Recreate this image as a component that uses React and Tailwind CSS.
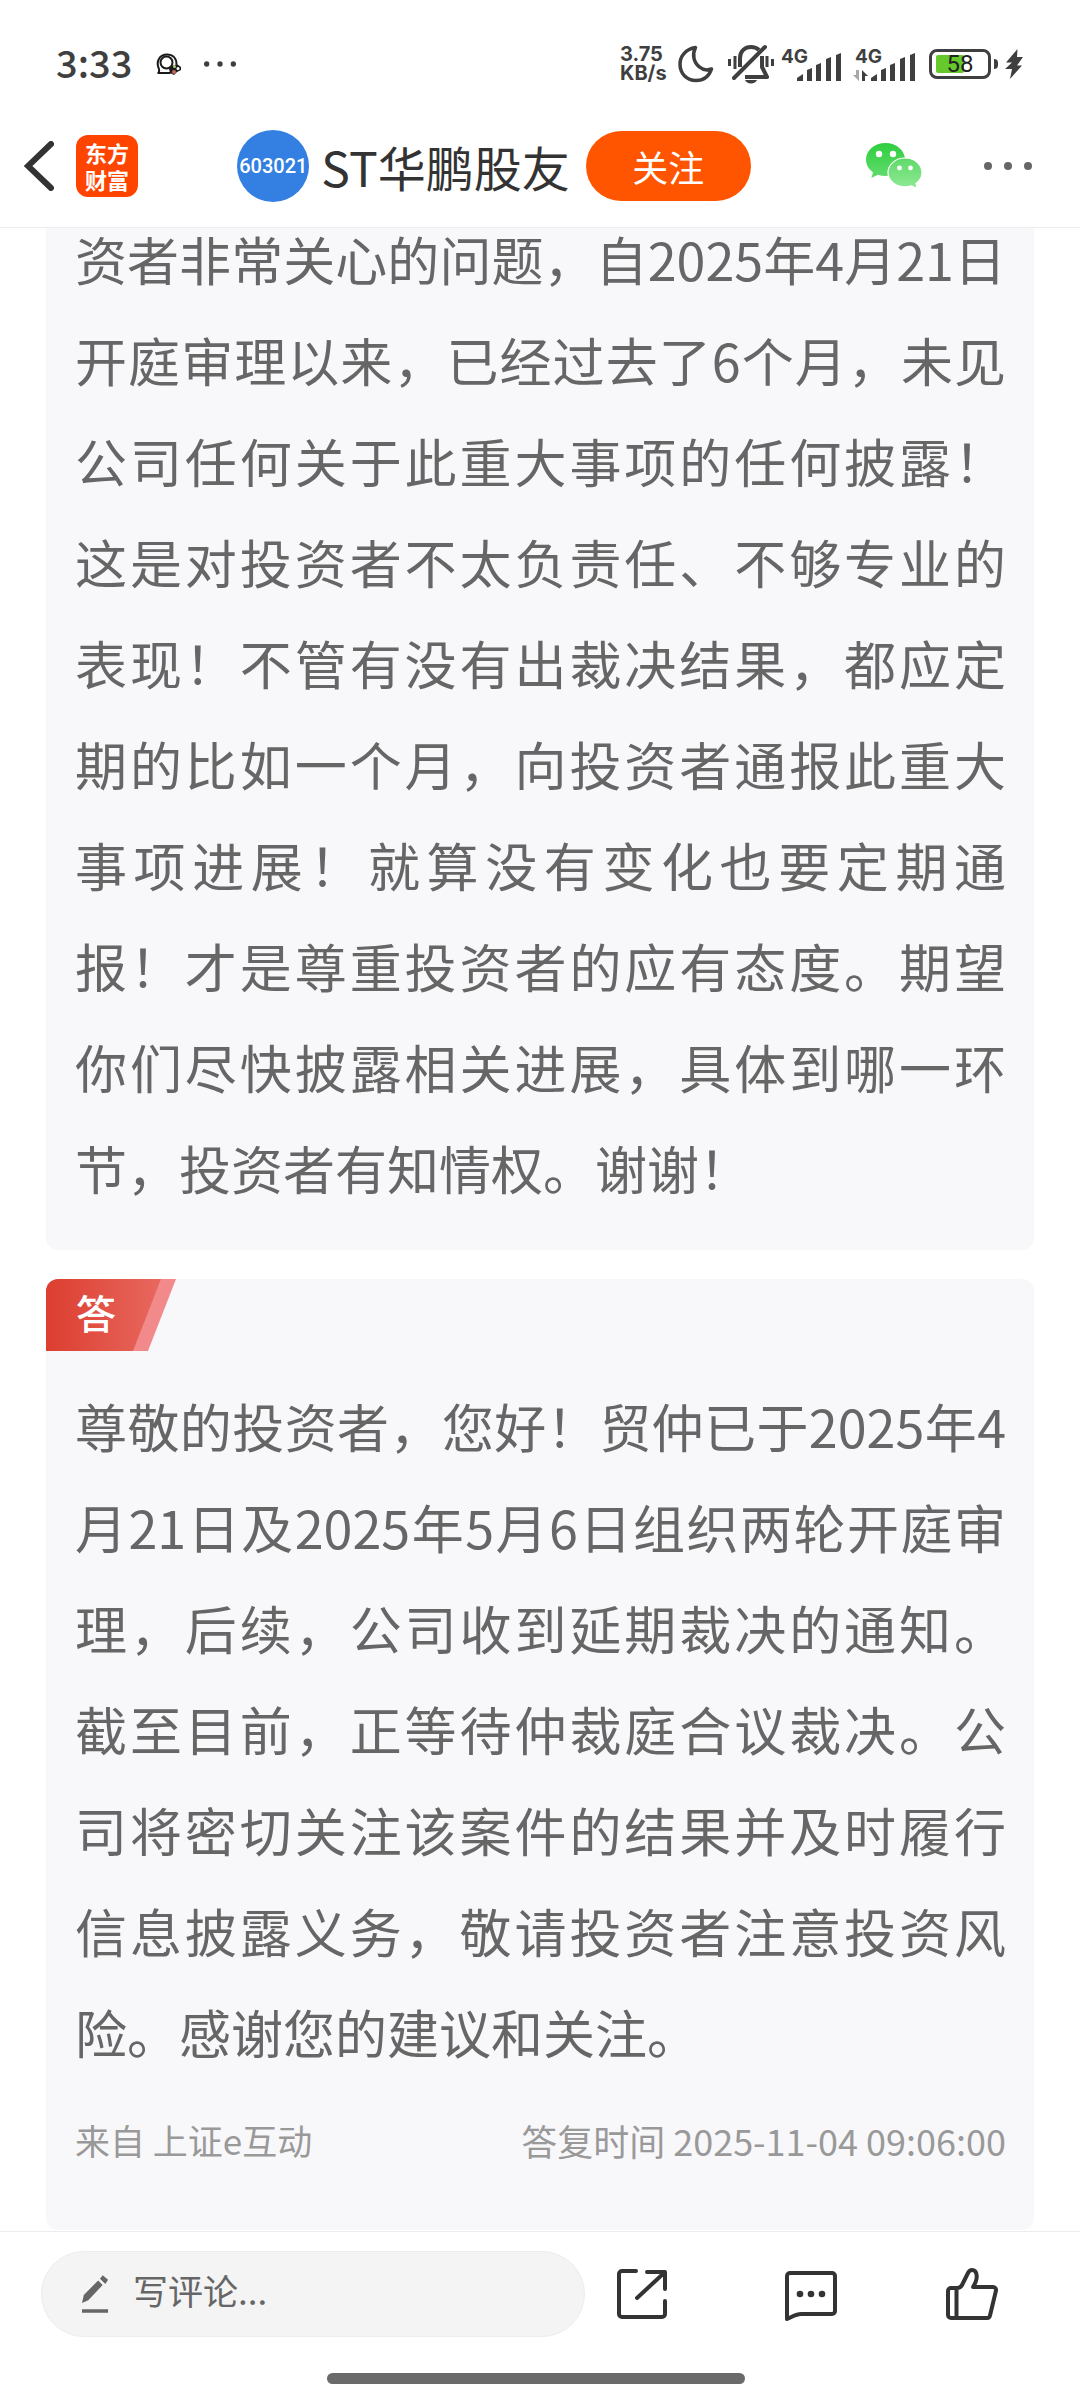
import React from 'react';

const question =
  '资者非常关心的问题，自2025年4月21日开庭审理以来，已经过去了6个月，未见公司任何关于此重大事项的任何披露！这是对投资者不太负责任、不够专业的表现！不管有没有出裁决结果，都应定期的比如一个月，向投资者通报此重大事项进展！就算没有变化也要定期通报！才是尊重投资者的应有态度。期望你们尽快披露相关进展，具体到哪一环节，投资者有知情权。谢谢！';

const answer =
  '尊敬的投资者，您好！贸仲已于2025年4月21日及2025年5月6日组织两轮开庭审理，后续，公司收到延期裁决的通知。截至目前，正等待仲裁庭合议裁决。公司将密切关注该案件的结果并及时履行信息披露义务，敬请投资者注意投资风险。感谢您的建议和关注。';

const Dots = ({ className }) => (
  <svg viewBox="0 0 48 8" className={className} fill="currentColor" aria-hidden="true">
    <circle cx="4" cy="4" r="4" />
    <circle cx="24" cy="4" r="4" />
    <circle cx="44" cy="4" r="4" />
  </svg>
);

const ChatIcon = () => (
  <svg viewBox="0 0 26 22" className="h-[22px] w-[26px]" fill="none" aria-hidden="true">
    <path d="M2.5 20c.8-1.500.8-3 .3-4.500C-.5 8 4 1.500 11 1.500c5.500 0 9.500 3.500 9.500 10" stroke="#1a1a1a" strokeWidth="2" />
    <path d="M1.500 20h13" stroke="#1a1a1a" strokeWidth="2" />
    <circle cx="10.500" cy="9.500" r="6" stroke="#1a1a1a" strokeWidth="2" />
    <path d="M13 16l3-3 5-2 4 3v3l-4 2-3 3-4-2z" fill="#1a1a1a" />
    <circle cx="18.500" cy="13.500" r="1.500" fill="#b5c47a" />
    <circle cx="22" cy="15.500" r="1.500" fill="#fff" />
    <circle cx="18" cy="19" r="2" fill="#c8685a" />
  </svg>
);

const MoonIcon = () => (
  <svg viewBox="0 0 36 38" className="h-[38px] w-9" fill="none" stroke="currentColor" strokeWidth="3.500" strokeLinejoin="round" aria-hidden="true">
    <path d="M17.500 2.500C8 4 2 11 2 19c0 10 7 16.500 16 16.500 7.500 0 13-4 15.500-11.500-4 1.500-8.500 1-12-2-6-4.500-7.500-12.500-4-19.500z" />
  </svg>
);

const MutedBellIcon = () => (
  <svg viewBox="0 0 46 40" className="h-10 w-[46px]" fill="none" stroke="currentColor" strokeWidth="4" aria-hidden="true">
    <path d="M12 23V14c0-7 5-11 11-11 3 0 6 1 8 3" />
    <path d="M34 12v11l5 10H17" strokeLinejoin="round" />
    <path d="M6 34 37 3" strokeLinecap="round" />
    <path d="M1.500 15v7M7 12v13M39 12v11M44.500 15v7" strokeWidth="3" />
    <path d="M17 36h12c-1 2-3 3.500-6 3.500s-5-1.500-6-3.500z" fill="currentColor" stroke="none" />
  </svg>
);

const Signal = ({ data }) => (
  <div className="relative h-[34px] w-[62px]">
    <span className="absolute top-0 left-0.5 font-[Inter] text-[19px] leading-5 font-bold">4G</span>
    <svg viewBox="0 0 62 34" className="h-full w-full" fill="currentColor" aria-hidden="true">
      {data && <path d="M6 23v11l-6-6h3v-5z" fill="#a8a8a8" />}
      {data && <path d="M9 23l6 6h-3v5H9z" />}
      <path d="M18 34v-3l6-4v7zM28 34V23l5-2v13zM37 34V18l5-2v18zM47 34V12l5-2v24zM57 34V8l5-2v28z" />
    </svg>
  </div>
);

const StatusBar = () => (
  <div className="flex h-[84px] items-end justify-between pr-[57px] pl-14 text-[#3f3f3f]">
    <div className="flex h-10 items-center">
      <span className="pb-1 text-[38px] leading-10 font-medium">3:33</span>
      <span className="ml-6">
        <ChatIcon />
      </span>
      <Dots className="ml-[22px] h-[6px] w-8" />
    </div>
    <div className="flex h-10 items-center">
      <div className="w-[46px] font-[Inter] text-[20px] leading-[19px] font-bold">
        <div>3.75</div>
        <div>KB/s</div>
      </div>
      <span className="ml-3"><MoonIcon /></span>
      <span className="ml-3.5"><MutedBellIcon /></span>
      <span className="ml-[5px]"><Signal /></span>
      <span className="ml-3"><Signal data /></span>
      <div className="relative ml-3.5 flex h-[30px] w-[62px] items-center justify-center rounded-lg border-3 border-current">
        <div className="absolute top-[3px] left-1 h-[18px] w-7 rounded-xs bg-[#65c92b]" />
        <span className="relative font-[Roboto] text-[24px] leading-6 text-[#222]">58</span>
      </div>
      <span className="ml-[3px] h-2.5 w-1 rounded-r-full bg-current" />
      <svg viewBox="0 0 18 30" className="ml-[7px] h-[30px] w-[18px]" fill="currentColor" aria-hidden="true">
        <path d="M12.500 0 1 13.500h6L0 20h7L5 30l12-13.500h-5L18 8h-6z" />
      </svg>
    </div>
  </div>
);

const WechatIcon = () => (
  <svg viewBox="0 0 56 46" className="h-[46px] w-14" aria-hidden="true">
    <defs>
      <linearGradient id="wx" x1="0" y1="0" x2="0" y2="1">
        <stop offset="0" stopColor="#2fce3f" />
        <stop offset="1" stopColor="#62dc6d" />
      </linearGradient>
      <linearGradient id="wx2" x1="0" y1="0" x2="0" y2="1">
        <stop offset="0" stopColor="#5fd96a" />
        <stop offset="1" stopColor="#8fea94" />
      </linearGradient>
    </defs>
    <path d="M19.500 0C8.700 0 0 7.400 0 16.600c0 5.200 2.700 9.700 7 12.700L5.400 35l6.600-3.300c2.400.8 5 1.200 7.500 1.200C30.300 32.900 39 25.700 39 16.600S30.300 0 19.500 0z" fill="url(#wx)" />
    <path d="M39 15c9.600 0 17 6.500 17 14.600 0 4.500-2.400 8.400-6 11L51 45.500l-5.500-2.700c-2 .7-4.200 1-6.500 1-9.600 0-17-6.300-17-14.200S29.400 15 39 15z" fill="url(#wx2)" stroke="#fff" strokeWidth="1.200" />
    <g fill="#fff">
      <circle cx="13" cy="11" r="3.200" />
      <circle cx="27" cy="11" r="3.200" />
      <circle cx="33.500" cy="25" r="2.400" />
      <circle cx="44.500" cy="25" r="2.400" />
    </g>
  </svg>
);

const Header = () => (
  <header className="relative z-10 border-b border-[#ececec] bg-white">
    <StatusBar />
    <div className="flex h-[143px] items-center justify-between pt-5 pr-12 pl-6">
      <div className="flex items-center">
        <button type="button" aria-label="返回">
          <svg viewBox="0 0 30 50" className="h-[50px] w-[30px]" fill="none" stroke="#333" strokeWidth="6" strokeLinecap="round" aria-hidden="true">
            <path d="M27 3 4 25l23 22" />
          </svg>
        </button>
        <a href="#" className="ml-[22px] flex h-[62px] w-[62px] flex-col items-center justify-center rounded-xl bg-[#ff4400] text-[22px] leading-[27px] font-bold text-white">
          <span>东方</span>
          <span>财富</span>
        </a>
      </div>
      <div className="mr-4 flex items-center">
        <span className="flex h-[72px] w-[72px] items-center justify-center rounded-full bg-[#3380e2] font-[Roboto] text-[20px] font-medium text-white">603021</span>
        <h1 className="ml-3 text-[48px] leading-[72px] text-[#333]">ST华鹏股友</h1>
        <button type="button" className="ml-4 h-[70px] w-[165px] rounded-full bg-[#ff5500] text-[36px] text-white">关注</button>
      </div>
      <div className="flex items-center">
        <button type="button" aria-label="微信分享"><WechatIcon /></button>
        <button type="button" aria-label="更多" className="ml-[62px] text-[#666]">
          <Dots className="h-2 w-12" />
        </button>
      </div>
    </div>
  </header>
);

const AnswerBadge = () => (
  <div className="relative h-[72px] w-[130px]">
    <svg viewBox="0 0 130 72" className="absolute inset-0 h-full w-full" aria-hidden="true">
      <defs>
        <linearGradient id="badge" x1="0" y1="0" x2="1" y2="0">
          <stop offset="0" stopColor="#dc3e2f" />
          <stop offset="1" stopColor="#e8685f" />
        </linearGradient>
      </defs>
      <path d="M100 0h30l-28 72H80z" fill="#f28a8b" />
      <path d="M0 0h115L87 72H0z" fill="url(#badge)" />
    </svg>
    <span className="relative pl-[30px] text-[40px] leading-[66px] font-medium text-white">答</span>
  </div>
);

const BottomBar = () => (
  <footer className="border-t border-[#ececec] bg-white">
    <div className="flex items-center pt-[19px] pr-[82px] pl-[41px]">
      <label className="flex h-[86px] w-[544px] items-center rounded-full border border-[#ececec] bg-[#f4f4f4] pl-10 text-[#666]">
        <svg viewBox="0 0 30 42" className="h-[42px] w-[30px]" fill="currentColor" aria-hidden="true">
          <path d="M0 31l2-9L18 6l5 5L7 28zM20 4l3-4 6 5-3 5zM0 38h29v4H0z" />
        </svg>
        <input type="text" placeholder="写评论..." aria-label="写评论" className="ml-6 w-full bg-transparent pb-2 text-[35px] outline-none placeholder:text-[#666]" />
      </label>
      <div className="ml-8 flex grow items-center justify-between">
        <button type="button" aria-label="分享" className="pr-2">
          <svg viewBox="0 0 50 50" className="h-[50px] w-[50px]" fill="none" stroke="#333" strokeWidth="4" strokeLinecap="round" strokeLinejoin="round" aria-hidden="true">
            <path d="M19 2H5a3 3 0 0 0-3 3v40a3 3 0 0 0 3 3h40a3 3 0 0 0 3-3V32M30 3h18v17M47 4 20 29" />
          </svg>
        </button>
        <button type="button" aria-label="评论" className="pt-1">
          <svg viewBox="0 0 52 50" className="h-[50px] w-[52px]" fill="none" stroke="#333" strokeWidth="4" strokeLinejoin="round" aria-hidden="true">
            <path d="M2 48V5a3 3 0 0 1 3-3h42a3 3 0 0 1 3 3v35a3 3 0 0 1-3 3H16c-5 0-9 3-14 5z" />
            <g fill="#333" stroke="none">
              <circle cx="15" cy="23" r="3.300" />
              <circle cx="26" cy="23" r="3.300" />
              <circle cx="37" cy="23" r="3.300" />
            </g>
          </svg>
        </button>
        <button type="button" aria-label="点赞">
          <svg viewBox="0 0 52 52" className="h-[52px] w-[52px]" fill="none" stroke="#333" strokeWidth="4" strokeLinejoin="round" aria-hidden="true">
            <path d="M11 20H5a3 3 0 0 0-3 3v24a3 3 0 0 0 3 3h36a3 3 0 0 0 3-2.500l6-25a3 3 0 0 0-3-3.500H27c6-9 4-17-1-17-2 0-3 1-4 3l-6 12c-1 2-2 3-5 3zM10.500 20v30" />
          </svg>
        </button>
      </div>
    </div>
    <div className="flex justify-center pt-9 pr-2 pb-4">
      <div className="h-[11px] w-[418px] rounded-full bg-[#6a6a6a]" />
    </div>
  </footer>
);

const App = () => {
  return (
    <div className="flex min-h-screen flex-col bg-white font-['Noto_Sans_CJK_SC',sans-serif]">
      <Header />
      <main className="flex grow flex-col gap-[29px] px-[46px] text-[#666]">
        <section className="rounded-b-xl bg-[#f8f8fa] pr-7 pb-8 pl-[29px]">
          <p className="-mt-5 text-justify text-[52px] leading-[101px] [text-spacing-trim:space-all]">{question}</p>
        </section>
        <section className="overflow-hidden rounded-xl bg-[#f8f8fa]">
          <AnswerBadge />
          <div className="pt-6 pr-7 pb-16 pl-[29px]">
            <p className="text-justify text-[52px] leading-[101px] [text-spacing-trim:space-all]">{answer}</p>
            <div className="mt-8 flex justify-between leading-[52px] text-[#999]">
              <span className="text-[35px]">来自 上证e互动</span>
              <span className="text-[36px]">答复时间 2025-11-04 09:06:00</span>
            </div>
          </div>
        </section>
      </main>
      <BottomBar />
    </div>
  );
};

export default App;
